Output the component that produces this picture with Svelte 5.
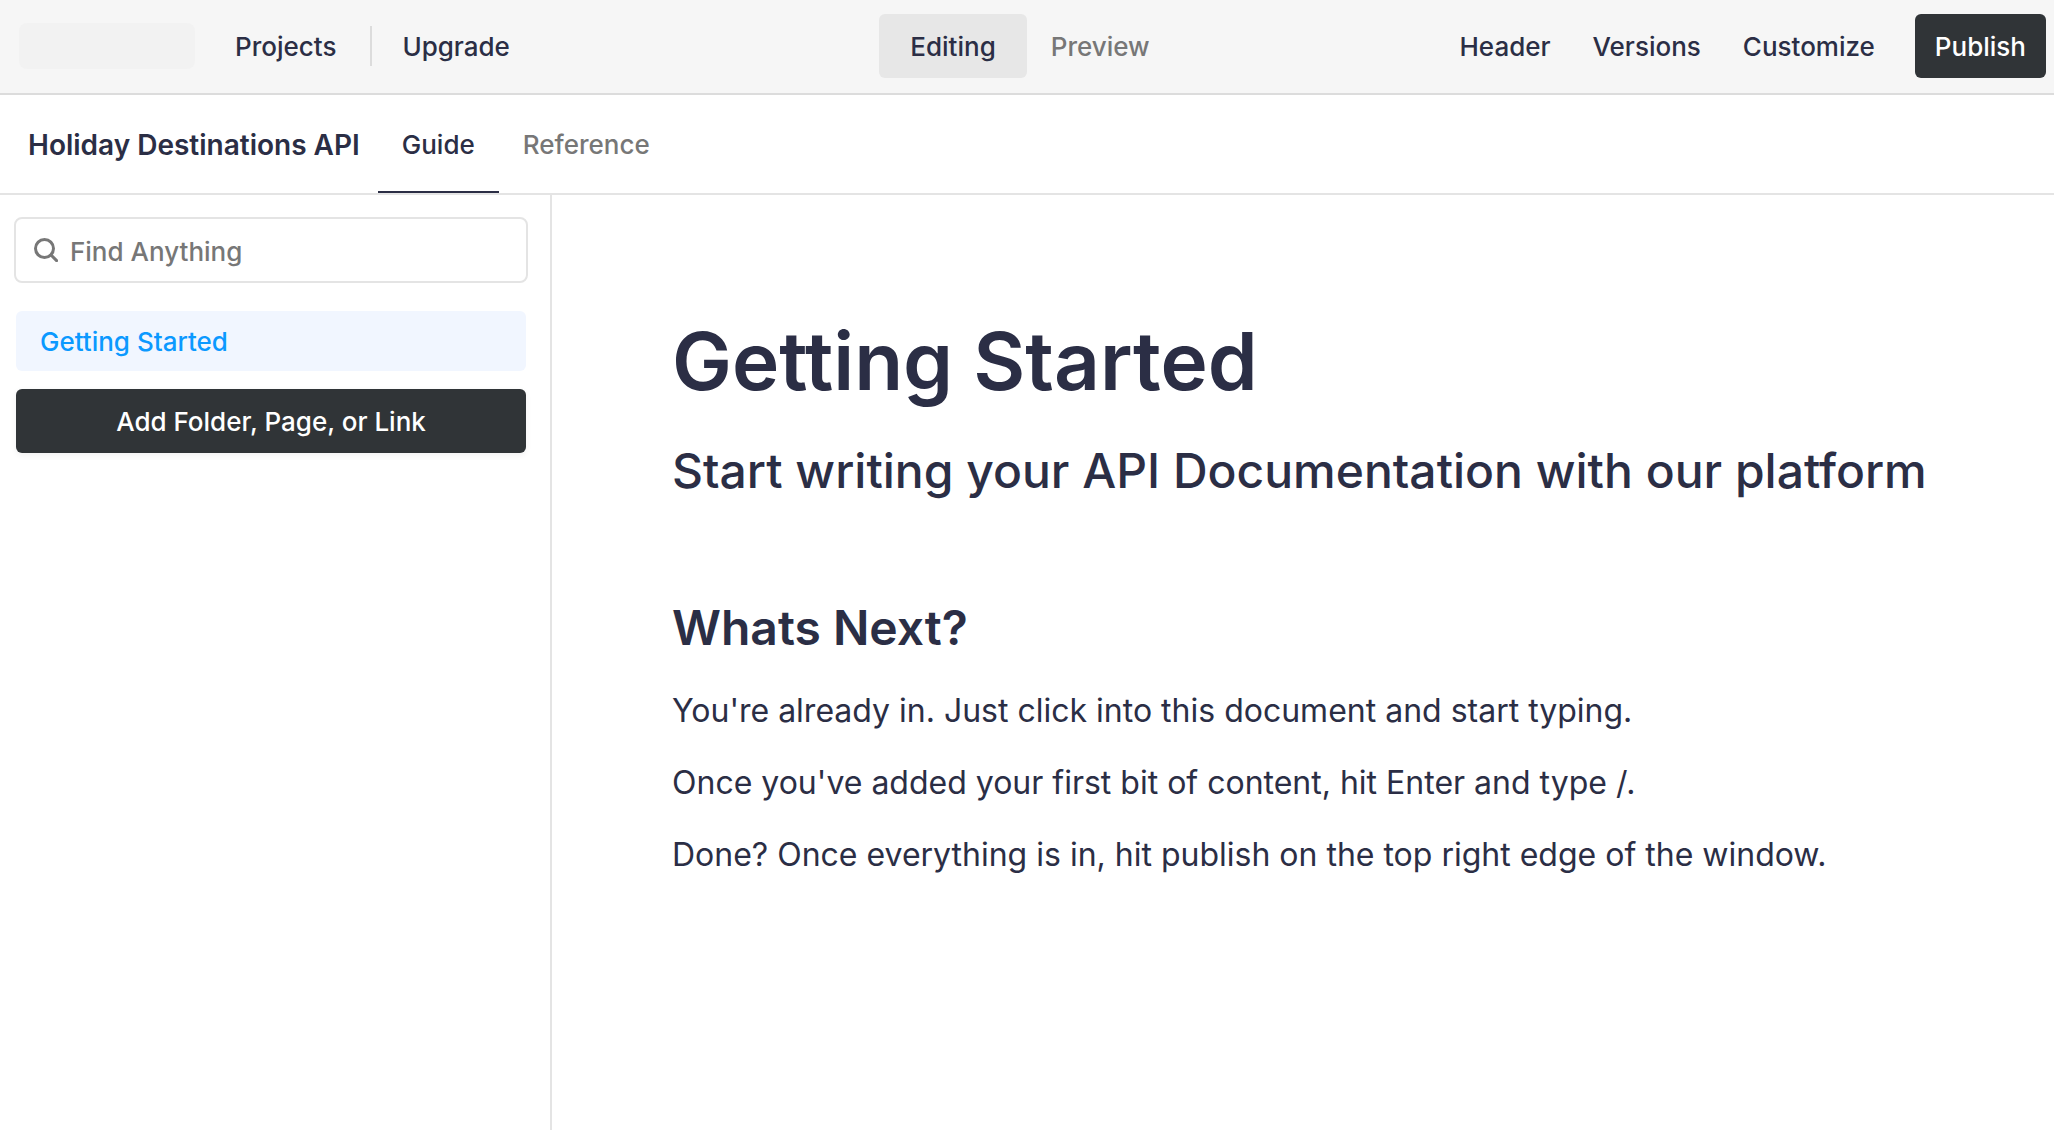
<script>
  let mode = $state('Editing');
  let query = $state('');
  const modes = ['Editing', 'Preview'];
  const tools = ['Header', 'Versions', 'Customize'];
  const paragraphs = [
    "You're already in. Just click into this document and start typing.",
    "Once you've added your first bit of content, hit Enter and type /.",
    'Done? Once everything is in, hit publish on the top right edge of the window.'
  ];
</script>

<div class="app">
  <header class="topbar">
    <nav class="left" aria-label="Workspace">
      <div class="logo"></div>
      <a href="#projects">Projects</a>
      <span class="divider"></span>
      <a href="#upgrade">Upgrade</a>
    </nav>
    <div class="modes">
      {#each modes as item}
        <button class="mode" class:active={mode === item} onclick={() => (mode = item)}>{item}</button>
      {/each}
    </div>
    <div class="right">
      <div class="tools">
        {#each tools as tool}
          <button class="tool">{tool}</button>
        {/each}
      </div>
      <button class="dark publish">Publish</button>
    </div>
  </header>

  <nav class="tabs" aria-label="Documentation">
    <span class="title">Holiday Destinations API</span>
    <a class="tab current" href="#guide">Guide</a>
    <a class="tab" href="#reference">Reference</a>
  </nav>

  <div class="body">
    <aside class="sidebar">
      <label class="search">
        <svg viewBox="0 0 24 24" width="24" height="24" aria-hidden="true">
          <circle cx="10.5" cy="10.5" r="9" />
          <path d="M17 17l5.6 5.6" />
        </svg>
        <input type="text" placeholder="Find Anything" aria-label="Find Anything" bind:value={query} />
      </label>
      <a class="page" href="#getting-started">Getting Started</a>
      <button class="dark add">Add Folder, Page, or Link</button>
    </aside>

    <main>
      <h1>Getting Started</h1>
      <p class="subtitle">Start writing your API Documentation with our platform</p>
      <h2>Whats Next?</h2>
      {#each paragraphs as text}
        <p>{text}</p>
      {/each}
    </main>
  </div>
</div>

<style>
  :global(body) {
    background: #fff;
  }
  .app {
    display: flex;
    flex-direction: column;
    min-height: 100vh;
    font-family: Inter, 'Liberation Sans', sans-serif;
    font-size: 26px;
    font-weight: 500;
    line-height: 32px;
    color: #2b2e45;
  }
  .app * {
    box-sizing: border-box;
  }
  a {
    color: inherit;
    text-decoration: none;
  }
  button {
    font: inherit;
    color: inherit;
    background: none;
    border: 0;
    border-radius: 6px;
    padding: 17px 0 15px;
    cursor: pointer;
  }
  .topbar {
    display: grid;
    grid-template-columns: 1fr auto 1fr;
    align-items: center;
    padding: 14px 8px 15px 19px;
    background: #f6f6f6;
    border-bottom: 2px solid #dcdcdc;
  }
  .left {
    display: flex;
    align-items: center;
  }
  .left a {
    padding-top: 2px;
  }
  .logo {
    width: 176px;
    height: 46px;
    margin-right: 40px;
    border-radius: 8px;
    background: #f2f2f2;
  }
  .divider {
    width: 2px;
    height: 40px;
    margin: 0 30px 0 34px;
    background: #dcdcdc;
  }
  .modes {
    display: flex;
  }
  .mode {
    padding-left: 24px;
    padding-right: 36px;
    color: #777;
  }
  .mode.active {
    padding-left: 31px;
    padding-right: 31px;
    color: #2b2e45;
    background: #e7e7e7;
  }
  .right {
    display: flex;
    align-items: center;
    justify-content: flex-end;
    gap: 40px;
  }
  .tools {
    display: flex;
    gap: 42px;
  }
  .dark {
    background: #303437;
    color: #fff;
    padding-left: 20px;
    padding-right: 20px;
  }
  .tabs {
    display: flex;
    height: 100px;
    padding-left: 28px;
    border-bottom: 2px solid #e4e4e4;
  }
  .title {
    padding: 34px 0 32px;
    margin-right: 18px;
    font-size: 28px;
    font-weight: 600;
  }
  .tab {
    padding: 34px 24px 30px;
    border-bottom: 2px solid transparent;
    color: #777;
  }
  .tab.current {
    color: #2b2e45;
    border-color: #2b2e45;
  }
  .body {
    display: flex;
    flex: 1;
  }
  .sidebar {
    display: flex;
    flex-direction: column;
    flex: 0 0 552px;
    padding: 22px 24px 24px 16px;
    border-right: 2px solid #e4e4e4;
  }
  .search {
    display: flex;
    align-items: center;
    gap: 12px;
    margin: 0 -2px 28px;
    padding: 0 18px;
    border: 2px solid #e4e4e4;
    border-radius: 8px;
  }
  .search svg {
    flex: none;
    fill: none;
    stroke: #777;
    stroke-width: 3;
    stroke-linecap: round;
  }
  .search input {
    flex: 1;
    min-width: 0;
    height: 62px;
    padding: 16px 0 14px;
    border: 0;
    outline: 0;
    background: none;
    font: inherit;
    color: inherit;
  }
  .search input::placeholder {
    color: #777;
    opacity: 1;
  }
  .page {
    padding: 15px 24px 13px;
    margin-bottom: 18px;
    border-radius: 6px;
    background: #f1f6ff;
    color: #0b99ff;
  }
  .add {
    box-shadow: 0 2px 6px rgba(0, 0, 0, 0.06);
  }
  main {
    flex: 1;
    padding: 118px 120px 40px;
  }
  h1,
  h2,
  p {
    margin: 0;
  }
  h1 {
    font-size: 80px;
    font-weight: 600;
    line-height: 96px;
  }
  p {
    margin-bottom: 24px;
    font-size: 32px;
    font-weight: 400;
    line-height: 48px;
  }
  .subtitle {
    margin: 32px 0 97px;
    font-size: 48px;
    font-weight: 500;
    line-height: 60px;
  }
  h2 {
    margin-bottom: 29px;
    font-size: 48px;
    font-weight: 600;
    line-height: 60px;
  }
</style>
